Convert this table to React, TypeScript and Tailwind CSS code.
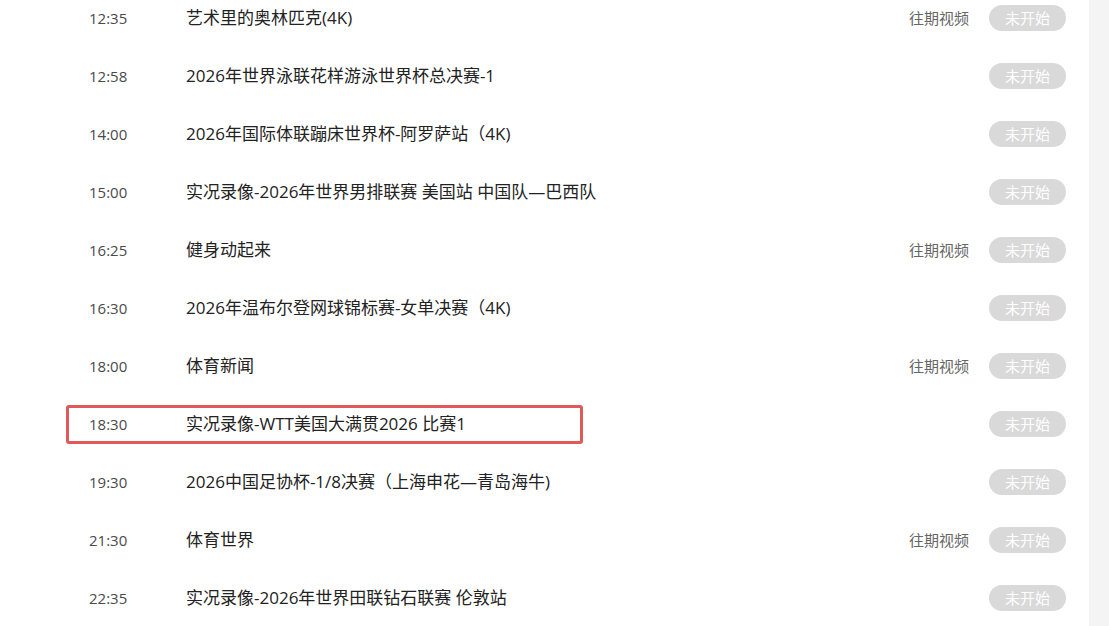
const ROWS = [
  { time: '12:35', title: '艺术里的奥林匹克(4K)', replay: true },
  { time: '12:58', title: '2026年世界泳联花样游泳世界杯总决赛-1', replay: false },
  { time: '14:00', title: '2026年国际体联蹦床世界杯-阿罗萨站（4K)', replay: false },
  { time: '15:00', title: '实况录像-2026年世界男排联赛 美国站 中国队—巴西队', replay: false },
  { time: '16:25', title: '健身动起来', replay: true },
  { time: '16:30', title: '2026年温布尔登网球锦标赛-女单决赛（4K)', replay: false },
  { time: '18:00', title: '体育新闻', replay: true },
  { time: '18:30', title: '实况录像-WTT美国大满贯2026 比赛1', replay: false, marked: true },
  { time: '19:30', title: '2026中国足协杯-1/8决赛（上海申花—青岛海牛)', replay: false },
  { time: '21:30', title: '体育世界', replay: true },
  { time: '22:35', title: '实况录像-2026年世界田联钻石联赛 伦敦站', replay: false },
]

export default function App() {
  return (
    <div
      className="flex h-[626px] w-[1109px] overflow-hidden bg-white"
      style={{ fontFamily: '"Open Sans", "Noto Sans CJK SC", sans-serif' }}
    >
      <div className="mt-[-11px] flex-1">
        {ROWS.map((row) => (
          <div key={row.time} className="relative flex h-[58px] items-center pl-[89px] pr-[23px]">
            {row.marked && (
              <div className="absolute left-[66px] top-[10px] h-[39px] w-[517px] rounded-[3px] border-[3px] border-[#e05a5a]" />
            )}
            <span className="w-[97px] text-[15px] text-[#4a4a4a]">{row.time}</span>
            <span className="flex-1 text-[17px] text-[#222]">{row.title}</span>
            {row.replay && (
              <span className="mr-[20px] text-[15px] text-[#666]">往期视频</span>
            )}
            <span className="flex h-[26px] w-[77px] items-center justify-center rounded-full bg-[#d9d9d9] text-[15px] text-white">
              未开始
            </span>
          </div>
        ))}
      </div>
      <div className="w-[20px] bg-[#f4f4f4]" />
    </div>
  )
}
